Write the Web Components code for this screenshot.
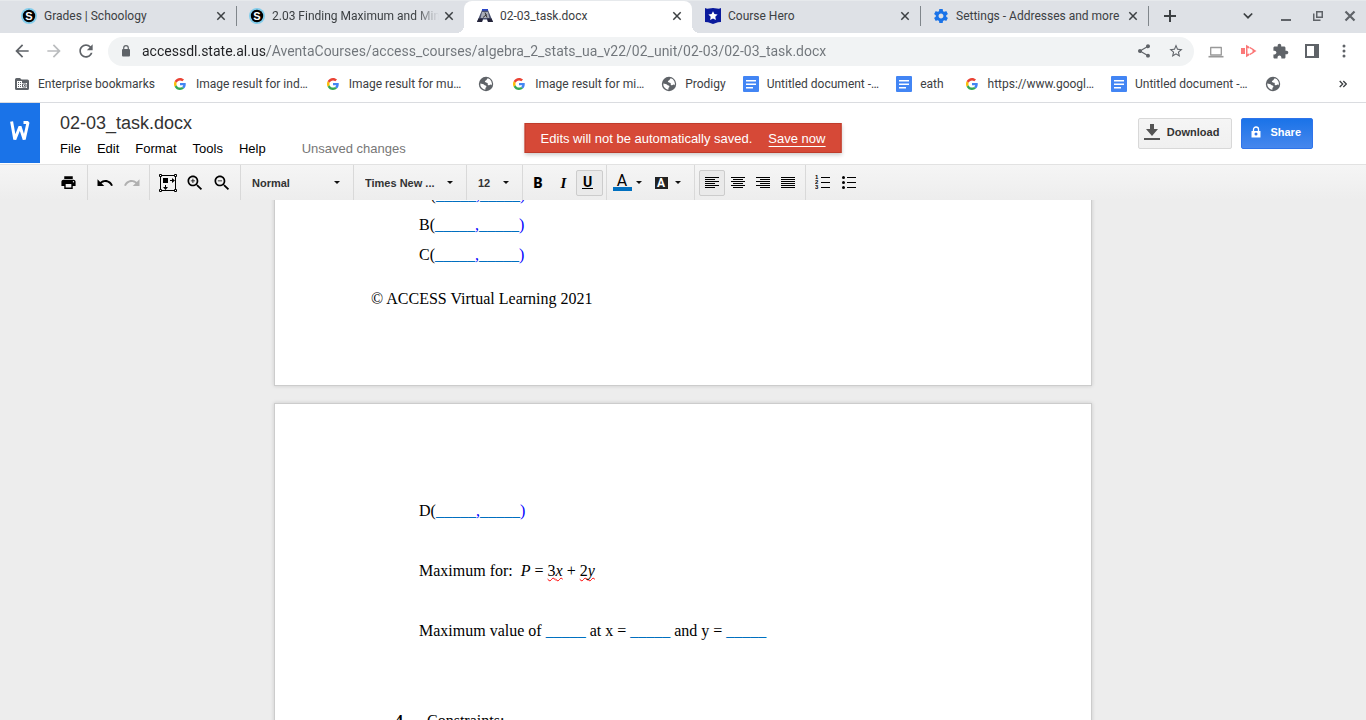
<!DOCTYPE html>
<html lang="en">
<head>
<meta charset="utf-8">
<title>02-03_task.docx</title>
<style>
  html, body { margin: 0; height: 100%; }
  body { font-family: "Liberation Sans", Arial, sans-serif; background: #ededed; }
</style>
</head>
<body>
<browser-window></browser-window>
<script>
const svg = (w, h, box, body) => `<svg width="${w}" height="${h}" viewBox="${box}" aria-hidden="true">${body}</svg>`;
const mat = (size, d) => svg(size, size, '0 0 24 24', `<path fill="currentColor" d="${d}"/>`);
const ICONS = {
  back: mat(20, 'M20 11H7.83l5.59-5.59L12 4l-8 8 8 8 1.41-1.41L7.83 13H20v-2z'),
  forward: mat(20, 'M12 4l-1.41 1.41L16.17 11H4v2h12.17l-5.58 5.59L12 20l8-8z'),
  reload: mat(20, 'M17.65 6.35C16.2 4.9 14.21 4 12 4c-4.42 0-7.99 3.58-7.99 8s3.57 8 7.99 8c3.73 0 6.84-2.55 7.73-6h-2.08c-.82 2.33-3.04 4-5.65 4-3.31 0-6-2.69-6-6s2.69-6 6-6c1.66 0 3.14.69 4.22 1.78L13 11h7V4l-2.35 2.35z'),
  lock: svg(10, 12, '0 0 10 12', '<rect x="1" y="4" width="8" height="7.500" rx="1" fill="currentColor"/><path d="M2.700 5V3a2.300 2.300 0 0 1 4.600 0v2" fill="none" stroke="currentColor" stroke-width="1.200"/>'),
  share: mat(16, 'M18 16.080c-.76 0-1.440.3-1.960.770L8.910 12.700c.05-.23.09-.46.09-.7s-.04-.47-.09-.7l7.050-4.110c.54.5 1.250.810 2.040.810 1.660 0 3-1.340 3-3s-1.340-3-3-3-3 1.340-3 3c0 .24.04.47.09.7L8.040 9.810C7.500 9.310 6.790 9 6 9c-1.660 0-3 1.340-3 3s1.340 3 3 3c.79 0 1.500-.31 2.040-.810l7.120 4.160c-.05.21-.08.43-.08.650 0 1.610 1.310 2.920 2.920 2.920s2.920-1.310 2.920-2.920-1.310-2.920-2.920-2.920z'),
  star: mat(16, 'M22 9.240l-7.190-.62L12 2 9.190 8.630 2 9.240l5.460 4.730L5.820 21 12 17.270 18.180 21l-1.630-7.030L22 9.240zM12 15.400l-3.760 2.270 1-4.280-3.320-2.880 4.380-.38L12 6.100l1.710 4.040 4.380.38-3.320 2.880 1 4.280L12 15.400z'),
  laptop: svg(16, 16, '0 0 16 16', '<path d="M2.700 4.500h10.600v7.500H2.700z" fill="none" stroke="#999" stroke-width="1.300" stroke-linejoin="round"/><path d="M.5 13.700h15" stroke="#999" stroke-width="1.600"/>'),
  camera: svg(17, 14, '0 0 17 14', '<path d="M1 4h4v6H1z" fill="#fb7878"/><path d="M6 .8l3 1.700v2L7.500 4v6L9 9.500v2l-3 1.700z" fill="#fb7878"/><path d="M9.500 3.400l4 2.300M9.500 10.600l4-2.300" stroke="#fb7878" stroke-width="1.300"/><path d="M12.500 4.500L16.500 7l-4 2.500z" fill="#fb7878"/>'),
  puzzle: mat(17, 'M20.500 11H19V7c0-1.100-.9-2-2-2h-4V3.500C13 2.120 11.880 1 10.500 1S8 2.120 8 3.500V5H4c-1.100 0-1.990.9-1.990 2v3.800H3.500c1.490 0 2.700 1.210 2.700 2.700s-1.210 2.700-2.700 2.700H2V20c0 1.100.9 2 2 2h3.800v-1.500c0-1.490 1.210-2.700 2.700-2.700s2.700 1.210 2.700 2.700V22H17c1.100 0 2-.9 2-2v-4h1.500c1.380 0 2.500-1.120 2.500-2.500S21.880 11 20.500 11z'),
  panel: svg(14, 14, '0 0 14 14', '<path d="M1 1h12v12H1z" fill="none" stroke="currentColor" stroke-width="2"/><path d="M9 1h4v12H9z" fill="currentColor"/>'),
  dots: svg(4, 14, '0 0 4 14', '<g fill="currentColor"><circle cx="2" cy="2" r="1.500"/><circle cx="2" cy="7" r="1.500"/><circle cx="2" cy="12" r="1.500"/></g>'),
  x: svg(10, 10, '0 0 10 10', '<path d="M1.300 1.300l7.400 7.400M8.700 1.300l-7.400 7.400" stroke="currentColor" stroke-width="1.500"/>'),
  xbig: svg(12, 12, '0 0 12 12', '<path d="M1.500 1.500l9 9M10.500 1.500l-9 9" stroke="#5f6368" stroke-width="2.200"/>'),
  plus: svg(12, 12, '0 0 12 12', '<path d="M0 6h12M6 0v12" stroke="currentColor" stroke-width="2"/>'),
  chevron: svg(10, 8, '0 0 10 8', '<path d="M.8 1.500L5 5.700l4.200-4.200" fill="none" stroke="currentColor" stroke-width="1.700"/>'),
  minimize: svg(10, 12, '0 0 10 12', '<path d="M0 10h10" stroke="#5f6368" stroke-width="2"/>'),
  restore: svg(10, 10, '0 0 10 10', '<path d="M3.750.75h5.500v5.500h-5.500z" fill="none" stroke="#5f6368" stroke-width="1.500"/><path d="M.75 2.500v6.750H7.500" fill="none" stroke="#5f6368" stroke-width="1.500"/>'),
  schoology: svg(16, 16, '0 0 16 16', '<circle cx="8" cy="8" r="8" fill="#82cdec"/><circle cx="8" cy="8" r="6.200" fill="#000"/><text x="8" y="12" text-anchor="middle" font-family="Liberation Sans" font-weight="700" font-size="11" fill="#fff">S</text>'),
  access: svg(16, 14, '0 0 16 14', '<path d="M5 1h6l5 12h-5l-.8-2.500H5.800L5 13H0z" fill="#4a5270"/><path d="M5 0h6v1.600H5z" fill="#2a46c8"/><path d="M5 3h6l1.400 6H3.600z" fill="#a9adb8"/><path d="M8 3.500l2 5M6 8.500l3.600-3" stroke="#333" stroke-width="1" fill="none"/><path d="M0 13l1.400-3.500H6L5 13zM11 13l-1-3.500h4.600L16 13z" fill="#24243a"/>'),
  hero: svg(16, 16, '0 0 16 16', '<path d="M0 0q1.500 1 4 .6 2.500-.2 4-.6 1.500.4 4 .6 2.500.4 4-.6v14l-3 .2L8 16l-5-1.800L0 14z" fill="#0a1a9c"/><path d="M8 3.200l1.400 2.900 3.200.4-2.300 2.200.6 3.200L8 10.400l-2.900 1.500.6-3.200-2.300-2.200 3.200-.4z" fill="#fff"/>'),
  gear: svg(14, 14, '2 2 20 20', '<path fill="#1a73e8" d="M19.430 12.980c.04-.32.07-.64.07-.98s-.03-.66-.07-.98l2.110-1.650c.19-.15.24-.42.12-.64l-2-3.460c-.12-.22-.39-.3-.61-.22l-2.490 1c-.52-.4-1.080-.73-1.690-.98l-.38-2.650C14.460 2.180 14.250 2 14 2h-4c-.25 0-.46.18-.49.42l-.38 2.650c-.61.25-1.170.59-1.690.98l-2.490-1c-.23-.09-.49 0-.61.22l-2 3.460c-.13.22-.07.49.12.64l2.110 1.650c-.04.32-.07.65-.07.98s.03.66.07.98l-2.110 1.650c-.19.15-.24.42-.12.64l2 3.460c.12.22.39.3.61.22l2.490-1c.52.4 1.080.73 1.690.98l.38 2.650c.03.24.24.42.49.42h4c.25 0 .46-.18.49-.42l.38-2.650c.61-.25 1.170-.59 1.690-.98l2.490 1c.23.09.49 0 .61-.22l2-3.460c.12-.22.07-.49-.12-.64l-2.110-1.650zM12 15.500c-1.930 0-3.500-1.570-3.500-3.500s1.570-3.500 3.500-3.500 3.500 1.570 3.500 3.500-1.570 3.500-3.500 3.500z"/>'),
  folder: svg(14, 12, '0 0 14 12', '<path d="M1.500 0H5l1.500 1.500h6A1.500 1.500 0 0 1 14 3v7.500a1.500 1.500 0 0 1-1.500 1.500h-11A1.500 1.500 0 0 1 0 10.500v-9A1.500 1.500 0 0 1 1.500 0z" fill="#5f6368"/><path d="M2 3h5v2h5v5H2z" fill="#fff"/><path d="M3 4.500h3M3 6.500h3M3 8.500h3" stroke="#5f6368" stroke-dasharray="1 1"/><path d="M7.500 6h3.500v3H7.500zM9 7.500h1" fill="none" stroke="#5f6368"/>'),
  google: svg(12, 12, '0 0 48 48', '<path fill="#EA4335" d="M24 9.500c3.540 0 6.710 1.220 9.210 3.600l6.850-6.850C35.900 2.380 30.470 0 24 0 14.620 0 6.510 5.380 2.560 13.220l7.980 6.190C12.430 13.720 17.740 9.500 24 9.500z"/><path fill="#4285F4" d="M46.980 24.550c0-1.570-.15-3.090-.38-4.550H24v9.020h12.940c-.58 2.960-2.260 5.480-4.780 7.180l7.730 6c4.510-4.180 7.090-10.360 7.090-17.650z"/><path fill="#FBBC05" d="M10.530 28.590c-.48-1.450-.76-2.990-.76-4.590s.27-3.140.76-4.590l-7.980-6.190C.92 16.460 0 20.120 0 24c0 3.880.92 7.540 2.560 10.780l7.970-6.190z"/><path fill="#34A853" d="M24 48c6.480 0 11.930-2.130 15.890-5.810l-7.730-6c-2.150 1.450-4.920 2.300-8.160 2.300-6.260 0-11.570-4.220-13.470-9.910l-7.980 6.190C6.510 42.620 14.620 48 24 48z"/>'),
  globe: svg(16, 16, '0 0 16 16', '<circle cx="8" cy="8" r="7.200" fill="#5f6368"/><path d="M9.800 2.200c-1.600 1-.5 1.800-2 2.300s-1 1.700.2 1.900 2 .3 1.700 1.500 1.500 1.600 2.500.9 1.500.2 1.300.9a5.700 5.700 0 0 0-3.700-7.500zM2.300 7.400c1.500.4 3.300.2 3.800 1.300s2.400.4 2.300 1.700-1 .9-1 1.900.2 1.300-.2 1.500A5.800 5.800 0 0 1 2.300 7.400z" fill="#fff"/>'),
  gdoc: svg(16, 16, '0 0 16 16', '<rect width="16" height="16" rx="1" fill="#4285f4"/><path d="M3 4.700h10M3 8.200h10M3 11.700h7" stroke="#fff" stroke-width="1.600"/>'),
  more: svg(8, 8, '0 0 8 8', '<path d="M.7 1l3 3-3 3M4.300 1l3 3-3 3" fill="none" stroke="currentColor" stroke-width="1.300"/>'),
  wordmark: svg(22, 22, '0 0 22 22', '<path d="M2.600 1.500l3.200 18L11 6.500l4.200 13L19 2.500h-4.500" fill="none" stroke="#fff" stroke-width="3" stroke-linejoin="bevel"/>'),
  print: mat(17, 'M19 8H5c-1.660 0-3 1.340-3 3v6h4v4h12v-4h4v-6c0-1.660-1.340-3-3-3zm-3 11H8v-5h8v5zm3-7c-.55 0-1-.45-1-1s.45-1 1-1 1 .45 1 1-.45 1-1 1zm-1-9H6v4h12V3z'),
  undo: mat(18, 'M12.500 8c-2.650 0-5.050.99-6.900 2.600L2 7v9h9l-3.620-3.620c1.390-1.160 3.160-1.880 5.120-1.880 3.540 0 6.550 2.310 7.600 5.500l2.370-.78C21.080 11.030 17.150 8 12.500 8z'),
  redo: mat(18, 'M18.400 10.600C16.550 8.990 14.150 8 11.500 8c-4.650 0-8.580 3.030-9.960 7.220L3.900 16c1.050-3.190 4.050-5.500 7.600-5.500 1.950 0 3.730.72 5.120 1.880L13 16h9V7l-3.600 3.600z'),
  fit: svg(20, 20, '0 0 20 20', '<path d="M2.500 2.500h15v15h-15z" fill="none" stroke="#000"/><g fill="#fff" stroke="#000"><path d="M1.500 1.500h2v2h-2zM16.500 1.500h2v2h-2zM1.500 16.500h2v2h-2zM16.500 16.500h2v2h-2z"/></g><path d="M5 5h5v5H5zM14 5l3 2.500-3 2.500V8h-2V7h2zM7 12h1v2h2l-2.500 3L5 14h2z"/>'),
  zoomin: mat(20, 'M15.500 14h-.79l-.28-.27C15.410 12.590 16 11.110 16 9.500 16 5.910 13.090 3 9.500 3S3 5.910 3 9.500 5.910 16 9.500 16c1.610 0 3.090-.59 4.230-1.570l.27.28v.79l5 4.990L20.490 19l-4.990-5zm-6 0C7.010 14 5 11.990 5 9.500S7.010 5 9.500 5 14 7.010 14 9.500 11.990 14 9.500 14zM12 10h-2v2H9v-2H7V9h2V7h1v2h2z'),
  zoomout: mat(20, 'M15.500 14h-.79l-.28-.27C15.410 12.590 16 11.110 16 9.500 16 5.910 13.090 3 9.500 3S3 5.910 3 9.500 5.910 16 9.500 16c1.610 0 3.090-.59 4.230-1.570l.27.28v.79l5 4.990L20.490 19l-4.990-5zm-6 0C7.010 14 5 11.990 5 9.500S7.010 5 9.500 5 14 7.010 14 9.500 11.990 14 9.500 14zM7 9h5v1H7z'),
  caret: svg(6, 3, '0 0 6 3', '<path d="M0 0h6L3 3z" fill="#111"/>'),
  left: svg(14, 12, '0 0 14 12', '<path d="M0 .5h14M0 2.500h10M0 4.500h14M0 6.500h10M0 8.500h14M0 10.500h10" stroke="#000"/>'),
  center: svg(14, 12, '0 0 14 12', '<path d="M0 .5h14M2 2.500h10M0 4.500h14M2 6.500h10M0 8.500h14M2 10.500h10" stroke="#000"/>'),
  right: svg(14, 12, '0 0 14 12', '<path d="M0 .5h14M4 2.500h10M0 4.500h14M4 6.500h10M0 8.500h14M4 10.500h10" stroke="#000"/>'),
  justify: svg(14, 12, '0 0 14 12', '<path d="M0 .5h14M0 2.500h14M0 4.500h14M0 6.500h14M0 8.500h14M0 10.500h14" stroke="#000"/>'),
  ol: svg(16, 15, '0 0 16 15', '<path d="M6 2.500h9M6 7.500h9M6 12.500h9" stroke="#000"/><g font-family="Liberation Sans" font-size="6" font-weight="700"><text x="0" y="4">1</text><text x="0" y="9">2</text><text x="0" y="14">3</text></g>'),
  ul: svg(16, 15, '0 0 16 15', '<path d="M6 2.500h9M6 7.500h9M6 12.500h9" stroke="#000"/><circle cx="2.500" cy="2.500" r="1.500"/><circle cx="2.500" cy="7.500" r="1.500"/><circle cx="2.500" cy="12.500" r="1.500"/>'),
  download: svg(16, 16, '0 0 16 16', '<path d="M6 0h4v5h4L8 12 2 5h4zM0 14h16v2H0z" fill="#555"/>'),
  padlock: svg(10, 12, '0 0 10 12', '<path d="M2.500 6V3.200a2.500 2.200 0 0 1 5 0V6" fill="none" stroke="#fff" stroke-width="1.300"/><path d="M.5 5h9v6.500h-9z" fill="#fff"/><circle cx="5" cy="8" r="1.500" fill="#2f74ea"/>')
};

function define(name, css, html, after) {
  const t = document.createElement('template');
  t.innerHTML = `<style>*{box-sizing:border-box}button,select,input{font:inherit;color:inherit;margin:0;padding:0;border:0;background:none;border-radius:0}a{color:inherit;text-decoration:none}${css}</style>${html}`;
  customElements.define(name, class extends HTMLElement {
    constructor() {
      super();
      this.attachShadow({ mode: 'open' }).append(t.content.cloneNode(true));
    }
    connectedCallback() { if (after) after(this, this.shadowRoot); }
  });
}

define('ui-icon',
  ':host{display:inline-flex;flex:none;align-items:center;justify-content:center}svg{display:block}',
  '<span></span>',
  (el, root) => { root.querySelector('span').innerHTML = ICONS[el.getAttribute('name')]; });

define('icon-button', `
  :host{display:flex;flex:none;width:32px;height:28px}
  button{display:flex;width:100%;height:100%;align-items:center;justify-content:center}`,
  '<button type="button"><slot></slot></button>',
  (el, root) => root.querySelector('button').setAttribute('aria-label', el.getAttribute('label')));

define('browser-tab', `
  :host{display:flex;position:relative;flex:0 1 228px;min-width:0;height:32px;align-items:center;padding:0 7px 2px 13px}
  :host([divided])::after{content:"";position:absolute;right:-1px;top:5px;height:20px;width:1px;background:#80868b}
  .title{flex:1;min-width:0;margin-left:7px;overflow:hidden;white-space:nowrap;text-align:left}
  ui-icon{width:16px}
  .close{display:flex;width:16px;height:16px;align-items:center;justify-content:center;color:#3c4043}
  :host([fade]) .title{-webkit-mask-image:linear-gradient(90deg,#000 calc(100% - 26px),transparent calc(100% - 2px))}
  :host([active]){background:#fff;border-radius:8px 8px 0 0}
  :host([active])::before,:host([active])::after{content:"";position:absolute;bottom:0;width:8px;height:8px}
  :host([active])::before{left:-8px;background:radial-gradient(circle at 0 0,transparent 8px,#fff 8px)}
  :host([active])::after{right:-8px;background:radial-gradient(circle at 100% 0,transparent 8px,#fff 8px)}`,
  '<ui-icon></ui-icon><button class="title" type="button" role="tab"><slot></slot></button><button class="close" type="button" aria-label="Close tab"><ui-icon name="x"></ui-icon></button>',
  (el, root) => {
    const i = document.createElement('ui-icon');
    i.setAttribute('name', el.getAttribute('icon'));
    root.querySelector('ui-icon').replaceWith(i);
  });

define('tab-strip', `
  :host{display:flex;height:33px;padding-left:8px;background:#dee1e6;border-top:1px solid #e6e9ec;color:#3c4043;font:12px/16px Roboto,sans-serif;align-items:center}
  nav{display:flex;flex:0 1 1140px;min-width:0}
  .new{width:28px;margin-left:8px}
  .menu{margin-left:auto;margin-right:6px}
  icon-button{height:32px;padding-bottom:2px}`,
  `<nav role="tablist">
    <browser-tab icon="schoology" divided>Grades | Schoology</browser-tab>
    <browser-tab icon="schoology" fade>2.03 Finding Maximum and Minimum</browser-tab>
    <browser-tab icon="access" active>02-03_task.docx</browser-tab>
    <browser-tab icon="hero" divided>Course Hero</browser-tab>
    <browser-tab icon="gear" divided>Settings - Addresses and more</browser-tab>
  </nav>
  <icon-button class="new" label="New tab"><ui-icon name="plus"></ui-icon></icon-button>
  <icon-button class="menu" label="Search tabs"><ui-icon name="chevron"></ui-icon></icon-button>
  <icon-button label="Minimize"><ui-icon name="minimize"></ui-icon></icon-button>
  <icon-button label="Restore"><ui-icon name="restore"></ui-icon></icon-button>
  <icon-button label="Close"><ui-icon name="xbig"></ui-icon></icon-button>`);

define('address-bar', `
  :host{display:flex;height:36px;padding:0 6px;align-items:center;background:#fff;color:#5f6368;font:14px/20px Roboto,sans-serif}
  .off{color:#babcbe}
  .box{display:flex;flex:1;min-width:0;height:29px;align-items:center;margin:0 6px;padding:0 2px 0 13px;border-radius:15px;background:#f1f3f4}
  input{flex:1;min-width:0;height:20px;margin-left:11px;outline:0;color:#70757a;
    -webkit-text-fill-color:transparent;background:linear-gradient(90deg,#202124 125px,#70757a 125px);-webkit-background-clip:text;background-clip:text}`,
  `<icon-button label="Back"><ui-icon name="back"></ui-icon></icon-button>
  <icon-button label="Forward" class="off"><ui-icon name="forward"></ui-icon></icon-button>
  <icon-button label="Reload"><ui-icon name="reload"></ui-icon></icon-button>
  <div class="box"><ui-icon name="lock"></ui-icon>
    <input type="text" aria-label="Address" value="accessdl.state.al.us/AventaCourses/access_courses/algebra_2_stats_ua_v22/02_unit/02-03/02-03_task.docx">
    <icon-button label="Share"><ui-icon name="share"></ui-icon></icon-button>
    <icon-button label="Bookmark"><ui-icon name="star"></ui-icon></icon-button></div>
  <icon-button label="Screen"><ui-icon name="laptop"></ui-icon></icon-button>
  <icon-button label="Recorder"><ui-icon name="camera"></ui-icon></icon-button>
  <icon-button label="Extensions"><ui-icon name="puzzle"></ui-icon></icon-button>
  <icon-button label="Side panel"><ui-icon name="panel"></ui-icon></icon-button>
  <icon-button label="Menu"><ui-icon name="dots"></ui-icon></icon-button>`);

define('book-mark', `
  :host{display:block;flex:none}
  a{display:flex;gap:8px;align-items:center;white-space:pre}
  ui-icon{width:16px;height:16px}`,
  '<a href="#"><ui-icon></ui-icon><slot></slot></a>',
  (el, root) => {
    const i = document.createElement('ui-icon');
    i.setAttribute('name', el.getAttribute('icon'));
    root.querySelector('ui-icon').replaceWith(i);
    if (!el.textContent) root.querySelector('a').setAttribute('aria-label', 'Bookmark'), root.querySelector('slot').remove();
  });

define('bookmarks-bar', `
  :host{display:flex;height:34px;padding:0 8px 3px 14px;gap:17px;align-items:center;background:#fff;border-bottom:1px solid #dadce0;color:#3c4043;font:12px/16px Roboto,sans-serif;overflow:hidden}
  icon-button{margin-left:auto;color:#3c4043;width:30px}`,
  `<book-mark icon="folder">Enterprise bookmarks</book-mark><book-mark icon="google">Image result for ind…</book-mark><book-mark icon="google">Image result for mu…</book-mark><book-mark icon="globe"></book-mark><book-mark icon="google">Image result for mi…</book-mark><book-mark icon="globe">Prodigy</book-mark><book-mark icon="gdoc">Untitled document -…</book-mark><book-mark icon="gdoc">eath </book-mark><book-mark icon="google">https://www.googl…</book-mark><book-mark icon="gdoc">Untitled document -…</book-mark><book-mark icon="globe"></book-mark>
  <icon-button label="More bookmarks"><ui-icon name="more"></ui-icon></icon-button>`);

define('save-toast', `
  :host{display:flex;gap:16px;align-items:center;height:30px;padding:0 15px;background:#d64937;border:1px solid #bf3c2b;box-shadow:0 2px 4px rgba(0,0,0,.2);color:#fff;font-size:13px;line-height:15px;white-space:nowrap}
  a{border-bottom:1px solid #fff;margin-top:1px}`,
  '<span>Edits will not be automatically saved.</span><a href="#">Save now</a>');

define('app-header', `
  :host{display:flex;position:relative;height:62px;background:#fff;border-bottom:1px solid #e2e2e2;color:#000}
  .logo{display:flex;width:40px;height:60px;padding-bottom:4px;align-items:center;justify-content:center;background:#1a73e8}
  .names{flex:1;margin-left:20px;padding-top:9px}
  h1{margin:0;font-size:18px;line-height:22px;font-weight:400;color:#333}
  .menus{display:flex;gap:16px;margin-top:7px;font-size:13px;line-height:16px}
  .state{margin-left:20px;color:#777}
  .actions{display:flex;gap:9px;margin:15px 53px 0 0;font-size:11px;font-weight:700}
  .actions button{display:flex;height:31px;align-items:center;border:1px solid #d8d8d8;border-radius:2px}
  .actions .down{gap:7px;padding:0 12px 3px 5px;background:linear-gradient(#f5f5f5,#f0f0f0);color:#333}
  .actions .share{gap:9px;padding:0 11px 3px 9px;background:linear-gradient(#1a73e8,#4787ed);border-color:#2f74ea;color:#fff}
  save-toast{position:absolute;left:50%;top:20px;transform:translateX(-50%)}`,
  `<div class="logo"><ui-icon name="wordmark"></ui-icon></div>
  <div class="names"><h1>02-03_task.docx</h1>
    <div class="menus"><button type="button">File</button><button type="button">Edit</button><button type="button">Format</button><button type="button">Tools</button><button type="button">Help</button><span class="state">Unsaved changes</span></div></div>
  <div class="actions"><button class="down" type="button"><ui-icon name="download"></ui-icon>Download</button><button class="share" type="button"><ui-icon name="padlock"></ui-icon>Share</button></div>
  <save-toast></save-toast>`);

define('tool-group',
  ':host{display:flex;flex:none;align-items:center;height:100%;padding:0 4px;border-right:1px solid #d9d9d9}:host([last]){border-right:0}',
  '<slot></slot>');

define('drop-down', `
  :host{display:grid;flex:none;align-items:center;height:26px;width:104px}
  select,ui-icon{grid-area:1/1}
  select{appearance:none;width:100%;height:26px;padding-left:7px;outline:0}
  ui-icon{justify-self:end;margin-right:9px;pointer-events:none}
  :host([small]){width:47px}`,
  '<select><option></option></select><ui-icon name="caret"></ui-icon>',
  (el, root) => {
    root.querySelector('option').textContent = el.getAttribute('value');
    root.querySelector('select').setAttribute('aria-label', el.getAttribute('label'));
  });

define('edit-toolbar', `
  :host{display:flex;height:35px;padding-left:51px;align-items:center;background:linear-gradient(#f5f5f5,#ededed);color:#333;font-size:11px;font-weight:700;line-height:14px}
  icon-button{width:26px;height:26px;color:#000}
  .print{padding-right:6px}
  .on{border:1px solid #ccc;border-radius:2px;background:#eaeaea}
  .b,.u{font:700 14px/16px Roboto,sans-serif}
  .b{font-weight:900}
  .i{font:italic 700 15px/16px "Liberation Serif",serif}
  .u{width:27px}
  .u span{border-bottom:1px solid #000;line-height:12px;padding:0 1px;margin-right:4px}
  .biu{padding:0 3px 0 2px}
  .biu .i{width:25px}
  .gap1{gap:1px}
  .view{gap:1px;padding:0 5px}
  .ink,.mark{width:20px}
  .ink span{display:block;width:19px;border-bottom:4px solid #0070c0;font:400 16px/13px Roboto,sans-serif;text-align:center}
  .mark span{display:block;width:13px;height:12px;background:#222;color:#fff;font:700 12px/13px Roboto,sans-serif;text-align:center}
  .tip{width:14px}
  .mark{margin-left:5px}
  .color{padding:0 9px 0 5px}
  .align{padding-right:5px}
  .align icon-button{width:25px}
  .align .on{width:26px}`,
  `<tool-group class="print"><icon-button label="Print"><ui-icon name="print"></ui-icon></icon-button></tool-group>
  <tool-group class="gap1"><icon-button label="Undo"><ui-icon name="undo"></ui-icon></icon-button><icon-button label="Redo" style="color:#b0b0b0"><ui-icon name="redo"></ui-icon></icon-button></tool-group>
  <tool-group class="view"><icon-button label="Fit"><ui-icon name="fit"></ui-icon></icon-button><icon-button label="Zoom in"><ui-icon name="zoomin"></ui-icon></icon-button><icon-button label="Zoom out"><ui-icon name="zoomout"></ui-icon></icon-button></tool-group>
  <tool-group><drop-down label="Style" value="Normal"></drop-down></tool-group>
  <tool-group><drop-down label="Font" value="Times New ..."></drop-down></tool-group>
  <tool-group><drop-down small label="Size" value="12"></drop-down></tool-group>
  <tool-group class="biu"><icon-button class="b" label="Bold">B</icon-button><icon-button class="i" label="Italic">I</icon-button><icon-button class="u on" label="Underline"><span>U</span></icon-button></tool-group>
  <tool-group class="color"><icon-button class="ink" label="Text colour"><span>A</span></icon-button><icon-button class="tip" label="Choose text colour"><ui-icon name="caret"></ui-icon></icon-button><icon-button class="mark" label="Highlight"><span>A</span></icon-button><icon-button class="tip" label="Choose highlight"><ui-icon name="caret"></ui-icon></icon-button></tool-group>
  <tool-group class="align"><icon-button class="on" label="Align left"><ui-icon name="left"></ui-icon></icon-button><icon-button label="Align centre"><ui-icon name="center"></ui-icon></icon-button><icon-button label="Align right"><ui-icon name="right"></ui-icon></icon-button><icon-button label="Justify"><ui-icon name="justify"></ui-icon></icon-button></tool-group>
  <tool-group last><icon-button label="Numbered list"><ui-icon name="ol"></ui-icon></icon-button><icon-button label="Bulleted list"><ui-icon name="ul"></ui-icon></icon-button></tool-group>`);

define('doc-page', `
  :host{display:block;flex:none;width:818px;max-width:100%;padding:92px 96px;background:#fff;border:1px solid #ccc;box-shadow:0 0 4px rgba(0,0,0,.15)}`,
  '<slot></slot>');

define('fill-point',
  ':host{display:block;margin-left:48px;white-space:nowrap}.line{color:#0070c0}.mark{color:#00f}',
  '<slot></slot>(<span class="line">_____</span><span class="mark">,</span><span class="line">_____</span><span class="mark">)</span>');

define('doc-view', `
  :host{display:flex;flex-direction:column;align-items:center;gap:17px;overflow:hidden;flex:1;min-height:0;background:#ededed;color:#000;font:16px/30px "Liberation Serif","Times New Roman",serif}
  p{margin:0;white-space:pre-wrap}
  .scrolled{margin-top:-21px;padding-top:0;padding-bottom:71px}
  .foot{margin-top:14px}
  .in{margin:30px 0 0 48px}
  .line{color:#0070c0}
  .typo{text-decoration:underline wavy #f00 1px;text-decoration-skip-ink:none;text-underline-offset:1px}
  ol{margin:60px 0 0;padding:0 0 0 24px;list-style:none}
  li{display:flex}
  b{width:32px}`,
  `<doc-page class="scrolled">
    <fill-point>A</fill-point><fill-point>B</fill-point><fill-point>C</fill-point>
    <p class="foot">© ACCESS Virtual Learning 2021</p>
  </doc-page>
  <doc-page>
    <fill-point>D</fill-point>
    <p class="in">Maximum for:  <i>P</i> = <span class="typo">3<i>x</i></span> + <span class="typo">2<i>y</i></span></p>
    <p class="in">Maximum value of <span class="line">_____</span> at x = <span class="line">_____</span> and y = <span class="line">_____</span></p>
    <ol><li><b>4.</b>Constraints:</li></ol>
  </doc-page>`);

define('browser-window',
  ':host{display:flex;flex-direction:column;height:100vh;overflow:hidden}tab-strip,address-bar,bookmarks-bar,app-header,edit-toolbar{flex:none}',
  '<tab-strip></tab-strip><address-bar></address-bar><bookmarks-bar></bookmarks-bar><app-header></app-header><edit-toolbar></edit-toolbar><doc-view></doc-view>');
</script>
</body>
</html>
